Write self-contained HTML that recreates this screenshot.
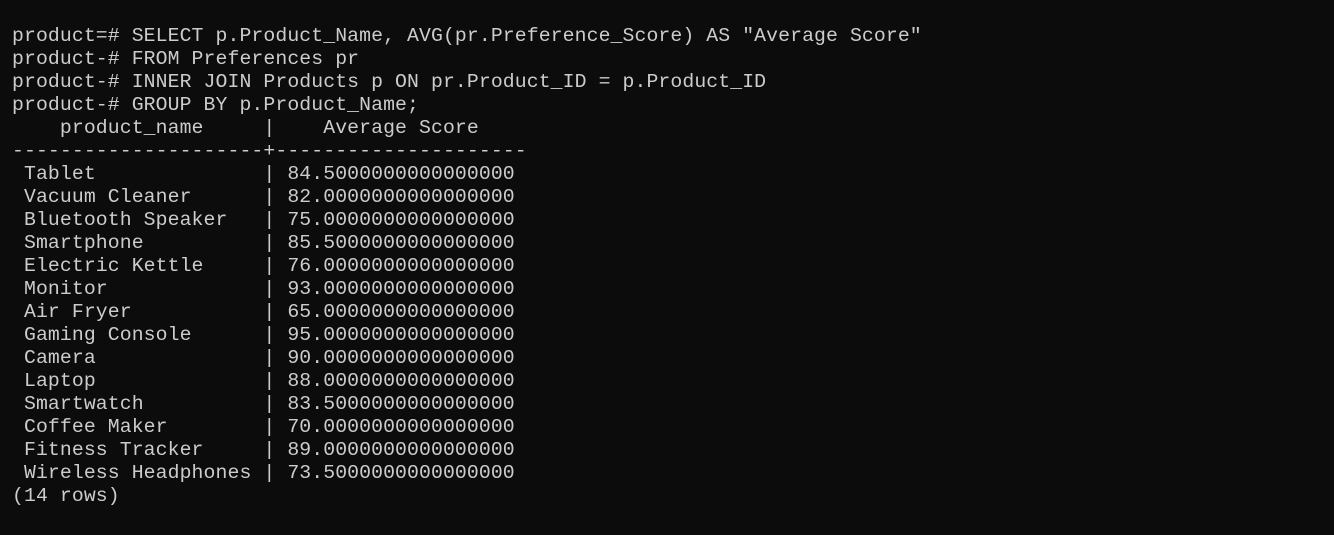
<!DOCTYPE html>
<html><head><meta charset="utf-8"><style>
html,body{margin:0;padding:0;background:#0c0c0c;width:1334px;height:535px;overflow:hidden}
pre{margin:0;position:absolute;left:12px;top:25px;font-family:"Liberation Mono",monospace;font-size:19.8px;letter-spacing:0.1px;line-height:23px;color:#cccccc}
</style></head><body><pre>product=# SELECT p.Product_Name, AVG(pr.Preference_Score) AS "Average Score"
product-# FROM Preferences pr
product-# INNER JOIN Products p ON pr.Product_ID = p.Product_ID
product-# GROUP BY p.Product_Name;
    product_name     |    Average Score
---------------------+---------------------
 Tablet              | 84.5000000000000000
 Vacuum Cleaner      | 82.0000000000000000
 Bluetooth Speaker   | 75.0000000000000000
 Smartphone          | 85.5000000000000000
 Electric Kettle     | 76.0000000000000000
 Monitor             | 93.0000000000000000
 Air Fryer           | 65.0000000000000000
 Gaming Console      | 95.0000000000000000
 Camera              | 90.0000000000000000
 Laptop              | 88.0000000000000000
 Smartwatch          | 83.5000000000000000
 Coffee Maker        | 70.0000000000000000
 Fitness Tracker     | 89.0000000000000000
 Wireless Headphones | 73.5000000000000000
(14 rows)</pre></body></html>
